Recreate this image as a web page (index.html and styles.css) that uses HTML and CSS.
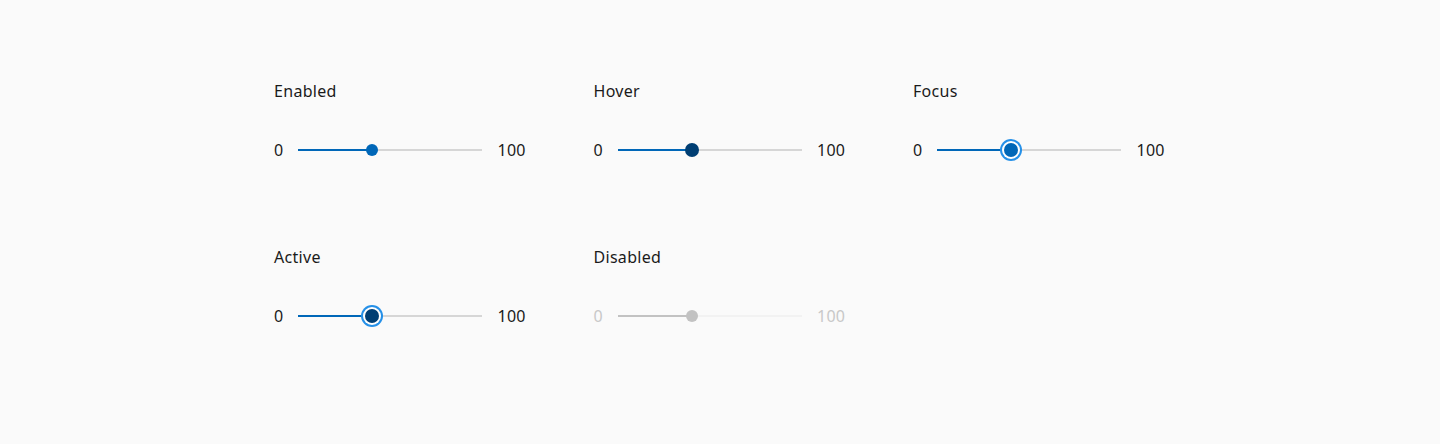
FILE: index.html
```html
<!DOCTYPE html>
<html lang="en">
<head>
<meta charset="utf-8">
<title>Slider states</title>
<link rel="stylesheet" href="styles.css">
</head>
<body>
<main class="grid">
  <section class="cell">
    <div class="label">Enabled</div>
    <div class="slider">
      <span class="val">0</span>
      <div class="track"><div class="fill" style="width:40%"></div><div class="thumb" style="left:40%"></div></div>
      <span class="val">100</span>
    </div>
  </section>
  <section class="cell hover">
    <div class="label">Hover</div>
    <div class="slider">
      <span class="val">0</span>
      <div class="track"><div class="fill" style="width:40%"></div><div class="thumb" style="left:40%"></div></div>
      <span class="val">100</span>
    </div>
  </section>
  <section class="cell focus">
    <div class="label">Focus</div>
    <div class="slider">
      <span class="val">0</span>
      <div class="track"><div class="fill" style="width:40%"></div><div class="thumb" style="left:40%"></div></div>
      <span class="val">100</span>
    </div>
  </section>
  <section class="cell active">
    <div class="label">Active</div>
    <div class="slider">
      <span class="val">0</span>
      <div class="track"><div class="fill" style="width:40%"></div><div class="thumb" style="left:40%"></div></div>
      <span class="val">100</span>
    </div>
  </section>
  <section class="cell disabled">
    <div class="label">Disabled</div>
    <div class="slider">
      <span class="val">0</span>
      <div class="track"><div class="fill" style="width:40%"></div><div class="thumb" style="left:40%"></div></div>
      <span class="val">100</span>
    </div>
  </section>
</main>
</body>
</html>
```
FILE: styles.css
```css
html, body {
  margin: 0;
  padding: 0;
  background: #fafafa;
}
body {
  font-family: "Noto Sans", "Open Sans", sans-serif;
  font-size: 16px;
  letter-spacing: 0.3px;
  color: #1a1a1a;
  height: 444px;
}
.grid {
  display: grid;
  grid-template-columns: repeat(3, 255.5px);
  column-gap: 64px;
  row-gap: 86px;
  padding: 80px 0 0 274px;
}
.cell {
  display: flex;
  flex-direction: column;
}
.label {
  line-height: 22px;
  height: 22px;
}
.slider {
  margin-top: 38px;
  height: 20px;
  display: flex;
  align-items: center;
  gap: 15px;
}
.val {
  line-height: 20px;
}
.track {
  position: relative;
  width: 184px;
  height: 2px;
  background: #d6d6d6;
}
.fill {
  position: absolute;
  left: 0;
  top: 0;
  height: 2px;
  background: #0067b8;
}
.thumb {
  position: absolute;
  top: 1px;
  width: 12px;
  height: 12px;
  border-radius: 50%;
  background: #0067b8;
  transform: translate(-50%, -50%);
}
.hover .thumb {
  width: 14px;
  height: 14px;
  background: #003e73;
}
.focus .thumb {
  width: 14px;
  height: 14px;
  background: #0067b8;
  box-shadow: 0 0 0 2px #ffffff, 0 0 0 4px #2590e8;
}
.active .thumb {
  width: 14px;
  height: 14px;
  background: #003e73;
  box-shadow: 0 0 0 2px #ffffff, 0 0 0 4px #2590e8;
}
.disabled .val {
  color: #c8c8c8;
}
.disabled .track {
  background: #f2f2f2;
}
.disabled .fill {
  background: #c2c2c2;
}
.disabled .thumb {
  background: #c2c2c2;
}
```
